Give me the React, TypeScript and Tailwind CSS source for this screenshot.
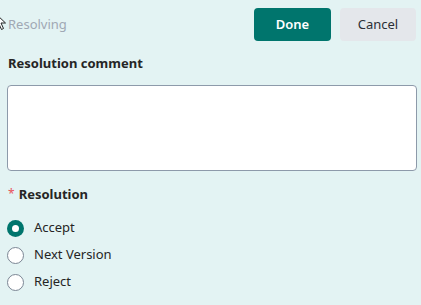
import React, { useState } from "react";

const options = ["Accept", "Next Version", "Reject"];

const App: React.FC = () => {
  const [value, setValue] = useState("Accept");

  return (
    <div
      className="relative w-[421px] h-[305px] bg-[#e3f3f3] overflow-hidden text-[13px] text-[#252525]"
      style={{ fontFamily: '"Noto Sans", "Open Sans", sans-serif' }}
    >
      {/* mouse cursor over the title */}
      <svg
        className="absolute left-[-5px] top-[13px]"
        width="12"
        height="18"
        viewBox="0 0 12 18"
      >
        <path
          d="M1 1 L1 14 L4 11 L6.5 16.5 L8.5 15.5 L6 10 L10.5 10 Z"
          fill="#fff"
          stroke="#222"
          strokeWidth="1"
          strokeLinejoin="round"
        />
      </svg>

      <div className="flex items-center justify-between pl-[8px] pr-[5px] pt-[8px]">
        <span className="text-[#a0a8b4]">Resolving</span>
        <div className="flex gap-[9px]">
          <button className="w-[77px] h-[33px] rounded-[4px] bg-[#00756d] text-white font-semibold">
            Done
          </button>
          <button className="w-[76px] h-[33px] rounded-[4px] bg-[#e4e7eb] text-[#2b2f36]">
            Cancel
          </button>
        </div>
      </div>

      <div className="px-[7px] pt-[13px]">
        <div className="font-bold pl-[1px] leading-[18px]">Resolution comment</div>
        <textarea className="mt-[13px] block w-[410px] h-[86px] bg-white border border-[#8d9aaa] rounded-[4px] resize-none outline-none" />

        <div className="mt-[14px] pl-[1px] font-bold leading-[18px] flex items-center">
          <span className="text-[#e8515c] font-normal mr-[4px] text-[12px]">*</span>
          Resolution
        </div>

        <div className="mt-[16px] flex flex-col gap-[9px]">
          {options.map((opt) => (
            <label
              key={opt}
              className="flex items-center gap-[10px] h-[18px] cursor-pointer"
              onClick={() => setValue(opt)}
            >
              {value === opt ? (
                <span className="w-[17px] h-[17px] rounded-full bg-[#00756d] flex items-center justify-center">
                  <span className="w-[7px] h-[7px] rounded-full bg-white" />
                </span>
              ) : (
                <span className="w-[17px] h-[17px] rounded-full bg-white border border-[#7b8694]" />
              )}
              <span>{opt}</span>
            </label>
          ))}
        </div>
      </div>
    </div>
  );
};

export default App;
